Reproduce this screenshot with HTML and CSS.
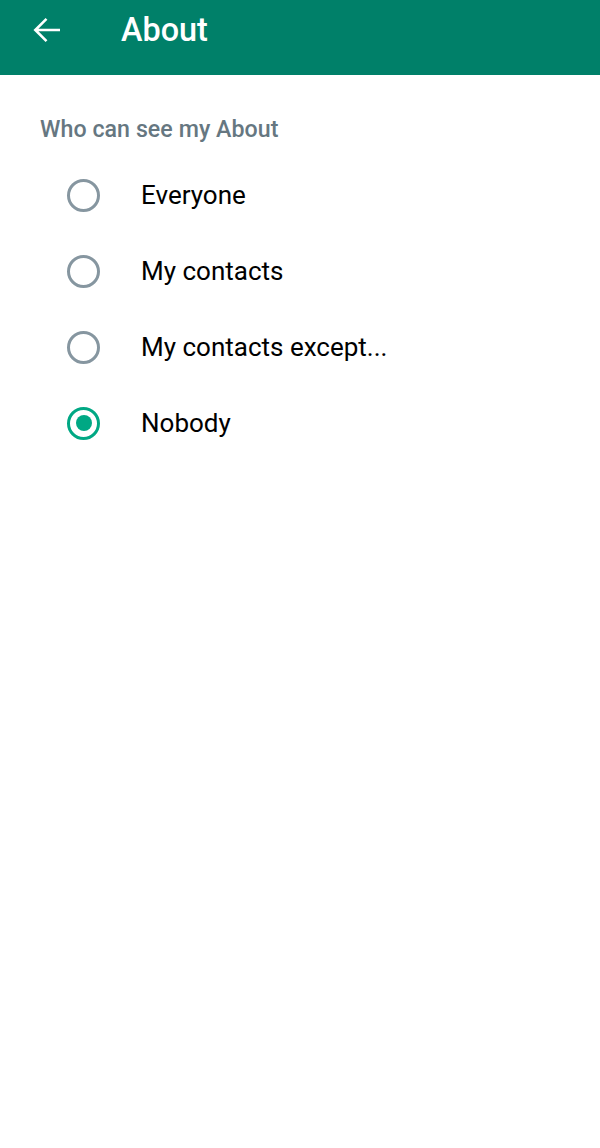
FILE: index.html
```html
<!DOCTYPE html>
<html>
<head>
<meta charset="utf-8">
<link rel="stylesheet" href="styles.css">
</head>
<body>
<header class="bar">
  <svg class="back" width="28" height="26" viewBox="0 0 28 26"><path d="M27 13H2.5M13.5 1.8L2.3 13l11.2 11.2" fill="none" stroke="#fff" stroke-width="2.6" stroke-linecap="butt" stroke-linejoin="miter"/></svg>
  <h1 class="title">About</h1>
</header>
<main class="content">
  <div class="label">Who can see my About</div>
  <ul class="options">
    <li class="opt"><span class="radio"></span><span class="txt">Everyone</span></li>
    <li class="opt"><span class="radio"></span><span class="txt">My contacts</span></li>
    <li class="opt"><span class="radio"></span><span class="txt">My contacts except...</span></li>
    <li class="opt"><span class="radio on"></span><span class="txt">Nobody</span></li>
  </ul>
</main>
</body>
</html>
```
FILE: styles.css
```css
* { box-sizing: border-box; }
body { margin: 0; background: #fff; font-family: Roboto, "Noto Sans", sans-serif; width: 600px; height: 1148px; }
.bar { height: 75px; background: #008069; display: flex; align-items: center; padding: 0 0 15px 33px; }
.back { width: 28px; height: 26px; flex: none; }
.title { margin: 0 0 0 60px; color: #fff; font-size: 32.4px; font-weight: 500; line-height: 38px; }
.content { padding: 40px 0 0 0; }
.label { padding-left: 40px; color: #667781; font-size: 23.2px; font-weight: 500; line-height: 28px; letter-spacing: 0.05px; }
.options { list-style: none; margin: 14px 0 0 0; padding: 0; }
.opt { display: flex; align-items: center; height: 76px; padding-left: 67px; }
.radio { flex: none; width: 33px; height: 33px; border: 3px solid #8696a0; border-radius: 50%; display: flex; align-items: center; justify-content: center; }
.radio.on { border-color: #00a884; }
.radio.on::after { content: ""; width: 16px; height: 16px; border-radius: 50%; background: #00a884; }
.txt { margin-left: 41px; font-size: 26px; color: #000; }
```
